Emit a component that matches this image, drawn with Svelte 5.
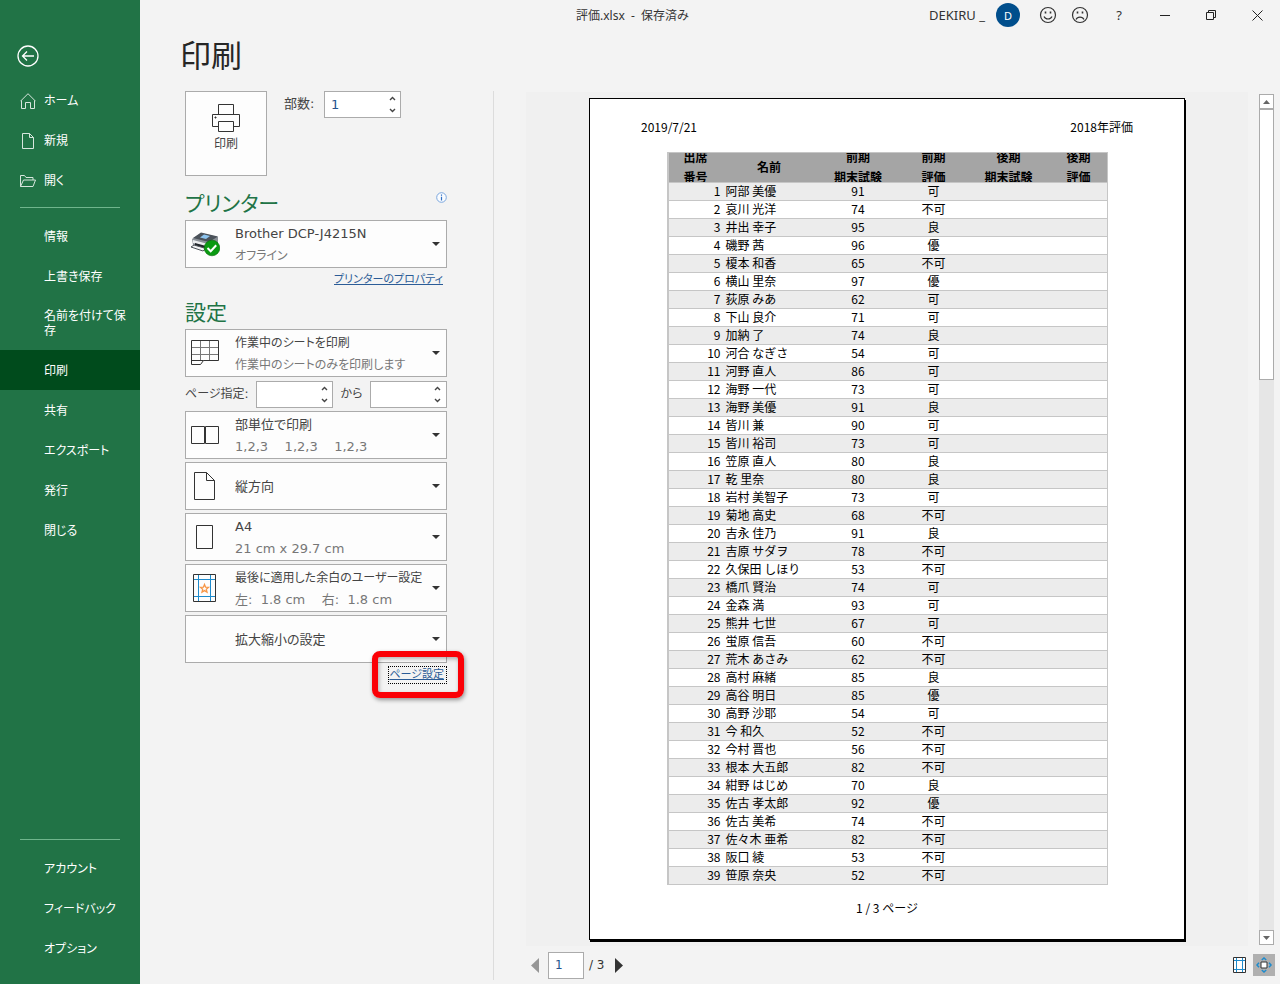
<script>
    let copies = '1';
    let pageFrom = '';
    let pageTo = '';
    let currentPage = '1';

    const fileItems = ['情報', '上書き保存', '名前を付けて保存', '印刷', '共有', 'エクスポート', '発行', '閉じる'];
    const footerItems = ['アカウント', 'フィードバック', 'オプション'];

    const settings = [
        { icon: 'collate', title: '部単位で印刷', detail: '1,2,3    1,2,3    1,2,3' },
        { icon: 'portrait', title: '縦方向' },
        { icon: 'paper', title: 'A4', detail: '21 cm x 29.7 cm' },
        { icon: 'margins', title: '最後に適用した余白のユーザー設定', detail: '左:  1.8 cm    右:  1.8 cm', compact: true },
        { icon: '', title: '拡大縮小の設定' }
    ];

    const columns = [
        { lines: ['出席', '番号'], width: 54 },
        { lines: ['名前'], width: 93 },
        { lines: ['前期', '期末試験'], width: 85 },
        { lines: ['前期', '評価'], width: 66 },
        { lines: ['後期', '期末試験'], width: 84 },
        { lines: ['後期', '評価'], width: 56 }
    ];

    const students = [
        ['阿部 美優', 91, '可'],
        ['哀川 光洋', 74, '不可'],
        ['井出 幸子', 95, '良'],
        ['磯野 茜', 96, '優'],
        ['榎本 和香', 65, '不可'],
        ['横山 里奈', 97, '優'],
        ['荻原 みあ', 62, '可'],
        ['下山 良介', 71, '可'],
        ['加納 了', 74, '良'],
        ['河合 なぎさ', 54, '可'],
        ['河野 直人', 86, '可'],
        ['海野 一代', 73, '可'],
        ['海野 美優', 91, '良'],
        ['皆川 兼', 90, '可'],
        ['皆川 裕司', 73, '可'],
        ['笠原 直人', 80, '良'],
        ['乾 里奈', 80, '良'],
        ['岩村 美智子', 73, '可'],
        ['菊地 高史', 68, '不可'],
        ['吉永 佳乃', 91, '良'],
        ['吉原 サダヲ', 78, '不可'],
        ['久保田 しほり', 53, '不可'],
        ['橋爪 賢治', 74, '可'],
        ['金森 満', 93, '可'],
        ['熊井 七世', 67, '可'],
        ['蛍原 信吾', 60, '不可'],
        ['荒木 あさみ', 62, '不可'],
        ['高村 麻緒', 85, '良'],
        ['高谷 明日', 85, '優'],
        ['高野 沙耶', 54, '可'],
        ['今 和久', 52, '不可'],
        ['今村 晋也', 56, '不可'],
        ['根本 大五郎', 82, '不可'],
        ['紺野 はじめ', 70, '良'],
        ['佐古 孝太郎', 92, '優'],
        ['佐古 美希', 74, '不可'],
        ['佐々木 亜希', 82, '不可'],
        ['阪口 綾', 53, '不可'],
        ['笹原 奈央', 52, '不可']
    ];
</script>

{#snippet spinner()}
    <span class="spin">
        <button type="button" aria-label="増やす">
            <svg width="7" height="5" viewBox="0 0 7 5"><path d="M1 4 3.5 1.5 6 4" fill="none" stroke="#444" stroke-width="1.4" /></svg>
        </button>
        <button type="button" aria-label="減らす">
            <svg width="7" height="5" viewBox="0 0 7 5"><path d="M1 1 3.5 3.5 6 1" fill="none" stroke="#444" stroke-width="1.4" /></svg>
        </button>
    </span>
{/snippet}

{#snippet arrow()}
    <svg class="arrow" width="8" height="4" viewBox="0 0 8 4"><path d="M0 0h8L4 4z" fill="#333" /></svg>
{/snippet}

<div class="backstage">
    <nav class="sidebar">
        <button class="back" type="button" aria-label="戻る">
            <svg width="22" height="22" viewBox="0 0 22 22" fill="none" stroke="#fff" stroke-width="1.3">
                <circle cx="11" cy="11" r="10" />
                <path d="M17 11H5.5M10 6.5 5.5 11l4.5 4.5" />
            </svg>
        </button>
        <a class="item" href="#home">
            <svg width="16" height="16" viewBox="0 0 16 16" fill="none" stroke="#d7e6dd">
                <path d="M.5 8.2 8 .7l7.5 7.5M1.500 7.500v8h4v-6h5v6h4v-8" />
            </svg>
            <span>ホーム</span>
        </a>
        <a class="item" href="#new">
            <svg width="16" height="16" viewBox="0 0 16 16" fill="none" stroke="#d7e6dd">
                <path d="M2.500.5h7l4 4v11h-11zM9.500.5v4h4" />
            </svg>
            <span>新規</span>
        </a>
        <a class="item" href="#open">
            <svg width="16" height="16" viewBox="0 0 16 16" fill="none" stroke="#d7e6dd">
                <path d="M.5 13.500v-11h4l1.500 2h7v2.500M.5 13.500l3-6.500h12l-2.500 6.500z" />
            </svg>
            <span>開く</span>
        </a>
        <hr />
        {#each fileItems as item}
            <a class="item text" class:active={item === '印刷'} href="#{item}">{item}</a>
        {/each}
        <div class="bottom">
            <hr />
            {#each footerItems as item}
                <a class="item text" href="#{item}">{item}</a>
            {/each}
        </div>
    </nav>

    <main>
        <header class="titlebar">
            <span class="file">評価.xlsx  -  保存済み</span>
            <span class="user">DEKIRU _</span>
            <span class="avatar">D</span>
            <button class="face" type="button" aria-label="満足">
                <svg width="18" height="18" viewBox="0 0 18 18" fill="none" stroke="#333" stroke-width="1.2">
                    <circle cx="9" cy="9" r="7.5" />
                    <path d="M5 10.500c1.500 3.300 6.500 3.300 8 0" />
                    <path d="M6.500 5.500v2M11.500 5.500v2" stroke-width="1.6" />
                </svg>
            </button>
            <button class="face" type="button" aria-label="不満">
                <svg width="18" height="18" viewBox="0 0 18 18" fill="none" stroke="#333" stroke-width="1.2">
                    <circle cx="9" cy="9" r="7.5" />
                    <path d="M5 13.500c1.500-3.300 6.500-3.300 8 0" />
                    <path d="M6.500 5.500v2M11.500 5.500v2" stroke-width="1.6" />
                </svg>
            </button>
            <button class="window" type="button">?</button>
            <button class="window" type="button" aria-label="最小化">
                <svg width="10" height="10" viewBox="0 0 10 10"><path d="M0 5.500h10" stroke="#222" /></svg>
            </button>
            <button class="window" type="button" aria-label="元に戻す">
                <svg width="10" height="10" viewBox="0 0 10 10" fill="none" stroke="#222"><path d="M.5 2.500h7v7h-7zM2.500 2.500v-2h7v7h-2" /></svg>
            </button>
            <button class="window" type="button" aria-label="閉じる">
                <svg width="11" height="11" viewBox="0 0 11 11"><path d="m.5.5 10 10M10.500.5l-10 10" stroke="#222" /></svg>
            </button>
        </header>

        <h1>印刷</h1>

        <div class="content">
            <section class="options">
                <div class="print-row">
                    <button class="print" type="button">
                        <svg width="30" height="30" viewBox="0 0 30 30" fill="#fdfdfd" stroke="#333">
                            <path d="M7.500 11.500v-10h15v10" />
                            <path d="M1.500 11.500h27v12h-27z" />
                            <path d="M7.500 18.500h15v10h-15z" />
                            <path d="M4 14h1v1H4z" fill="#333" />
                        </svg>
                        印刷
                    </button>
                    <label for="copies">部数:</label>
                    <span class="number">
                        <input id="copies" type="text" bind:value={copies} />
                        {@render spinner()}
                    </span>
                </div>

                <div class="heading">
                    <h2>プリンター</h2>
                    <svg width="11" height="11" viewBox="0 0 11 11">
                        <circle cx="5.5" cy="5.5" r="4.8" fill="#fafcff" stroke="#7ba7de" />
                        <path d="M5.500 2.500v1.200M5.500 4.700v3.800" stroke="#2f6fc4" stroke-width="1.2" />
                    </svg>
                </div>
                <button class="dropdown" type="button" aria-haspopup="listbox">
                    <span class="icon">
                        <svg width="30" height="26" viewBox="0 0 30 26">
                            <path d="M2 8 11 2l17 4v8l-12 5L3 14z" fill="#8b9198" />
                            <path d="M3 7 11 1.500l17 4-9 5.500z" fill="#4b525a" />
                            <path d="m10 6.500 4-3 6 1.500-4 3z" fill="#8cc3ee" />
                            <path d="m3 9 15 4v3L3 12z" fill="#eceef0" />
                            <path d="m5 12 11 3v3L5 15z" fill="#22262b" />
                            <path d="m1 16 3-2 12 3.500-3 2.500z" fill="#f3f4f6" stroke="#4c5258" />
                            <circle cx="22" cy="17" r="7.8" fill="#0b9a12" stroke="#066b0a" stroke-width=".6" />
                            <path d="m17.500 17 3.200 3.200 5.500-6" fill="none" stroke="#fff" stroke-width="2" />
                        </svg>
                    </span>
                    <span class="label"><b>Brother DCP-J4215N</b><small class="compact">オフライン</small></span>
                    {@render arrow()}
                </button>
                <div class="link-row properties"><a href="#properties">プリンターのプロパティ</a></div>

                <div class="heading"><h2>設定</h2></div>
                <button class="dropdown" type="button" aria-haspopup="listbox">
                    <span class="icon">
                        <svg width="28" height="26" viewBox="0 0 28 26" fill="none">
                            <path d="M.5 7.500h27M.5 14.500h27M9.500.5v20M18.500.5v20" stroke="#777" />
                            <path d="M.5.5h27v20h-15l-3 4h-9zM.5 20.500h12" stroke="#333" />
                        </svg>
                    </span>
                    <span class="label"><b class="compact">作業中のシートを印刷</b><small class="compact">作業中のシートのみを印刷します</small></span>
                    {@render arrow()}
                </button>
                <div class="range">
                    <label for="from">ページ指定:</label>
                    <span class="number">
                        <input id="from" type="text" bind:value={pageFrom} />
                        {@render spinner()}
                    </span>
                    <label for="to">から</label>
                    <span class="number">
                        <input id="to" type="text" bind:value={pageTo} />
                        {@render spinner()}
                    </span>
                </div>
                {#each settings as setting}
                    <button class="dropdown" type="button" aria-haspopup="listbox">
                        <span class="icon">
                            {#if setting.icon === 'collate'}
                                <svg width="28" height="18" viewBox="0 0 28 18" fill="none" stroke="#333">
                                    <path d="M.5.5h13v17H.5zM14.500.5h13v17h-13z" />
                                </svg>
                            {:else if setting.icon === 'portrait'}
                                <svg width="22" height="28" viewBox="0 0 22 28" fill="none" stroke="#333">
                                    <path d="M.5.5h12l8 8v19H.5zM12.500.5v8h8" />
                                </svg>
                            {:else if setting.icon === 'paper'}
                                <svg width="18" height="24" viewBox="0 0 18 24" fill="none" stroke="#333">
                                    <path d="M.5.5h16v23H.5z" />
                                </svg>
                            {:else if setting.icon === 'margins'}
                                <svg width="24" height="28" viewBox="0 0 24 28" fill="none">
                                    <path d="M5.500 0v28M17.500 0v28M0 5.500h23M0 22.500h23" stroke="#1e8bcd" />
                                    <path d="M.5.5h22v27H.5z" stroke="#333" />
                                    <path d="m11.500 10.500 1.100 2.700 2.900.2-2.200 1.900.7 2.800-2.500-1.500-2.500 1.500.7-2.800-2.200-1.900 2.900-.2z" stroke="#f79646" stroke-width="1.3" />
                                </svg>
                            {/if}
                        </span>
                        <span class="label">
                            <b class:compact={setting.compact}>{setting.title}</b>
                            {#if setting.detail}<small>{setting.detail}</small>{/if}
                        </span>
                        {@render arrow()}
                    </button>
                {/each}
                <div class="link-row">
                    <a class="focused" href="#page-setup">ページ設定</a>
                    <span class="highlight"></span>
                </div>
            </section>

            <section class="preview">
                <div class="viewer">
                    <div class="canvas">
                        <article class="page">
                            <div class="page-head"><span>2019/7/21</span><span>2018年評価</span></div>
                            <table>
                                <colgroup>
                                    {#each columns as column}
                                        <col style="width: {column.width}px" />
                                    {/each}
                                </colgroup>
                                <thead>
                                    <tr>
                                        {#each columns as column}
                                            <th>
                                                <div>
                                                    {#each column.lines as line}<span>{line}</span>{/each}
                                                </div>
                                            </th>
                                        {/each}
                                    </tr>
                                </thead>
                                <tbody>
                                    {#each students as [name, score, grade], i}
                                        <tr>
                                            <td class="no">{i + 1}</td>
                                            <td class="name">{name}</td>
                                            <td>{score}</td>
                                            <td>{grade}</td>
                                            <td></td>
                                            <td></td>
                                        </tr>
                                    {/each}
                                </tbody>
                            </table>
                            <div class="page-foot">1 / 3 ページ</div>
                        </article>
                    </div>
                    <div class="scrollbar">
                        <button type="button" aria-label="上へ"><svg width="7" height="4" viewBox="0 0 7 4"><path d="M0 4h7L3.500 0z" fill="#666" /></svg></button>
                        <div class="track"><div class="thumb"></div></div>
                        <button type="button" aria-label="下へ"><svg width="7" height="4" viewBox="0 0 7 4"><path d="M0 0h7L3.500 4z" fill="#666" /></svg></button>
                    </div>
                </div>
                <footer class="pager">
                    <button type="button" aria-label="前のページ"><svg width="8" height="15" viewBox="0 0 8 15"><path d="M8 0v15L0 7.500z" fill="#969696" /></svg></button>
                    <input type="text" aria-label="ページ番号" bind:value={currentPage} />
                    <span class="total">/ 3</span>
                    <button type="button" aria-label="次のページ"><svg width="8" height="15" viewBox="0 0 8 15"><path d="M0 0v15l8-7.500z" fill="#333" /></svg></button>
                    <span class="tools">
                        <button type="button" aria-label="余白の表示">
                            <svg width="13" height="16" viewBox="0 0 13 16" fill="#fff">
                                <path d="M.5.5h12v15H.5z" stroke="#333" />
                                <path d="M3.500 1v14M9.500 1v14M1 3.500h11M1 12.500h11" stroke="#1e8bcd" />
                            </svg>
                        </button>
                        <button class="pressed" type="button" aria-label="ページに合わせる">
                            <svg width="16" height="16" viewBox="0 0 16 16" fill="none">
                                <path d="M5 5h6v6H5z" fill="#fff" stroke="#333" />
                                <path d="m5.800 3 2.200-2 2.200 2M5.800 13 8 15l2.200-2M3 5.800 1 8l2 2.200M13 5.800 15 8l-2 2.200" stroke="#1e8bcd" stroke-width="1.5" />
                            </svg>
                        </button>
                    </span>
                </footer>
            </section>
        </div>
    </main>
</div>

<style>
    :global(body) {
        margin: 0;
        background: #f3f3f3;
    }

    .backstage {
        display: flex;
        min-height: 100vh;
        background: #f3f3f3;
        color: #333;
        font-family: "DejaVu Sans", "Noto Sans CJK JP", sans-serif;
        font-size: 12px;
        line-height: 15px;
        font-feature-settings: "palt";
    }

    .backstage * {
        box-sizing: border-box;
    }

    button, input {
        font: inherit;
        font-feature-settings: inherit;
        color: inherit;
    }

    button {
        padding: 0;
        border: none;
        background: none;
        cursor: pointer;
    }

    svg {
        display: block;
        flex-shrink: 0;
    }

    .sidebar {
        display: flex;
        flex-direction: column;
        flex: 0 0 140px;
        padding: 40px 0 16px;
        background: #217346;
    }

    .back {
        width: 32px;
        height: 32px;
        margin: 0 0 8px 17px;
    }

    .item {
        display: flex;
        align-items: center;
        gap: 8px;
        min-height: 40px;
        padding: 13px 12px 11px 20px;
        color: #fff;
        text-decoration: none;
    }

    .item.text {
        padding-left: 44px;
    }

    .item.active {
        background: #004b1c;
    }

    hr {
        width: 100px;
        height: 1px;
        margin: 7px 20px 8px;
        border: none;
        background: #6fb58c;
    }

    .bottom {
        margin-top: auto;
    }

    main {
        display: flex;
        flex-direction: column;
        flex: 1;
        min-width: 0;
    }

    .titlebar {
        display: flex;
        align-items: center;
        height: 30px;
        padding-left: 436px;
        font-family: "Noto Sans", "Noto Sans CJK JP", sans-serif;
    }

    .file {
        flex: 1;
        white-space: pre;
    }

    .user {
        font-size: 13px;
    }

    .avatar {
        display: flex;
        align-items: center;
        justify-content: center;
        width: 24px;
        height: 24px;
        margin: 0 12px 0 11px;
        border-radius: 50%;
        background: #004e8c;
        color: #fff;
        font-size: 11px;
    }

    .face, .window {
        display: flex;
        align-items: center;
        justify-content: center;
        width: 32px;
        height: 30px;
    }

    .window {
        width: 46px;
        font-size: 13px;
    }

    h1 {
        margin: 0;
        padding: 0 40px;
        height: 61px;
        font-size: 31px;
        font-weight: 400;
        line-height: 52px;
        color: #262626;
    }

    .content {
        display: flex;
        flex: 1;
    }

    .options {
        flex: 0 0 354px;
        min-width: 0;
        padding: 0 46px 0 45px;
        margin-bottom: 4px;
        border-right: 1px solid #dcdcdc;
        color: #444;
    }

    .print-row {
        display: flex;
        align-items: flex-start;
        margin-bottom: 12px;
    }

    .print-row label {
        width: 57px;
        padding-left: 17px;
        font-size: 13px;
        line-height: 26px;
    }

    .print {
        display: flex;
        flex-direction: column;
        align-items: center;
        gap: 4px;
        width: 82px;
        height: 85px;
        padding-top: 11px;
        border: 1px solid #ababab;
        background: #fdfdfd;
    }

    .number {
        display: flex;
        width: 77px;
        height: 27px;
        border: 1px solid #ababab;
        background: #fff;
    }

    .number input {
        flex: 1;
        min-width: 0;
        padding: 0 0 0 6px;
        border: none;
        background: none;
        color: #26538d;
        font-size: 13px;
    }

    .spin {
        display: flex;
        flex-direction: column;
        width: 16px;
    }

    .spin button {
        display: flex;
        flex: 1;
        align-items: center;
        justify-content: center;
    }

    .heading {
        display: flex;
        justify-content: space-between;
        height: 32px;
    }

    .heading svg {
        margin-top: 4px;
    }

    h2 {
        margin: 0;
        font-size: 21px;
        font-weight: 400;
        line-height: 32px;
        color: #217346;
    }

    .dropdown {
        display: flex;
        align-items: center;
        width: 100%;
        height: 48px;
        margin-bottom: 3px;
        border: 1px solid #ababab;
        background: #fdfdfd;
        text-align: left;
    }

    .icon {
        display: flex;
        flex: 0 0 38px;
        align-items: center;
        justify-content: center;
    }

    .label {
        flex: 1;
        min-width: 0;
        padding: 1px 0 0 11px;
        line-height: 22px;
    }

    .label b, .label small {
        display: block;
        font-size: 13px;
        font-weight: 400;
        white-space: pre;
    }

    .label small {
        color: #777;
    }

    .label .compact {
        font-size: 12px;
    }

    .arrow {
        margin-right: 6px;
    }

    .link-row {
        position: relative;
        display: flex;
        justify-content: flex-end;
        height: 18px;
        font-size: 11px;
        line-height: 18px;
    }

    .link-row a {
        color: #2b5c97;
    }

    .properties {
        margin-bottom: 8px;
        padding-right: 4px;
    }

    .focused {
        padding: 0 3px 0 1px;
        outline: 1px dotted #000;
        outline-offset: -1px;
    }

    .highlight {
        position: absolute;
        top: -15px;
        right: -17px;
        width: 92px;
        height: 47px;
        border: 6px solid #fb0006;
        border-radius: 8px;
        box-shadow: 1px 2px 4px rgba(0, 0, 0, 0.4), inset 1px 2px 4px rgba(0, 0, 0, 0.3);
        pointer-events: none;
    }

    .range {
        display: flex;
        align-items: center;
        justify-content: space-between;
        height: 27px;
        margin: 4px 0 3px;
    }

    .preview {
        display: flex;
        flex-direction: column;
        flex: 1;
        min-width: 0;
        padding: 1px 6px 0 32px;
    }

    .viewer {
        display: flex;
        flex: 1;
        gap: 11px;
    }

    .canvas {
        flex: 1;
        min-width: 0;
        padding: 6px 0 4px;
        background: #f0f0f0;
    }

    .page {
        width: 596px;
        max-width: 100%;
        min-height: 842px;
        margin: 0 auto;
        padding: 19px 51px 0;
        border: 1px solid #000;
        background: #fff;
        box-shadow: 1px 2px 0 #000;
        color: #000;
        font-family: "Noto Sans CJK JP", sans-serif;
        font-feature-settings: normal;
    }

    .page-head {
        display: flex;
        justify-content: space-between;
        height: 34px;
        line-height: 18px;
    }

    table {
        width: 441px;
        margin: 0 auto;
        border: 1px solid #c6c6c6;
        border-left-width: 2px;
        border-bottom: none;
        border-spacing: 0;
        table-layout: fixed;
    }

    th, td {
        padding: 0;
        border-bottom: 1px solid #c6c6c6;
        text-align: center;
        white-space: nowrap;
    }

    th {
        background: #a5a5a5;
    }

    th div {
        display: flex;
        flex-direction: column;
        justify-content: center;
        height: 29px;
        padding-bottom: 2px;
        overflow: hidden;
        line-height: 20px;
    }

    td {
        height: 18px;
        line-height: 15px;
        vertical-align: top;
    }

    tbody tr:nth-child(odd) {
        background: #ececec;
    }

    td.no {
        padding-right: 2px;
        text-align: right;
    }

    td.name {
        padding-left: 3px;
        text-align: left;
    }

    .page-foot {
        padding-top: 14px;
        line-height: 18px;
        text-align: center;
    }

    .scrollbar {
        display: flex;
        flex-direction: column;
        width: 15px;
        margin: 2px 0 1px;
    }

    .scrollbar button {
        display: flex;
        align-items: center;
        justify-content: center;
        height: 15px;
        border: 1px solid #ababab;
        background: #fff;
    }

    .track {
        flex: 1;
        background: #e6e6e6;
    }

    .thumb {
        height: 33%;
        border: 1px solid #ababab;
        background: #fff;
    }

    .pager {
        display: flex;
        align-items: center;
        height: 38px;
        padding-left: 5px;
    }

    .pager input {
        width: 36px;
        height: 27px;
        margin: 0 5px 0 9px;
        padding: 0 6px;
        border: 1px solid #ababab;
        background: #fff;
        color: #26538d;
    }

    .total {
        margin-right: 10px;
    }

    .tools {
        display: flex;
        align-items: center;
        gap: 7px;
        margin: 0 -1px 0 auto;
    }

    .pressed {
        padding: 3px;
        background: #b0b0b0;
    }
</style>
